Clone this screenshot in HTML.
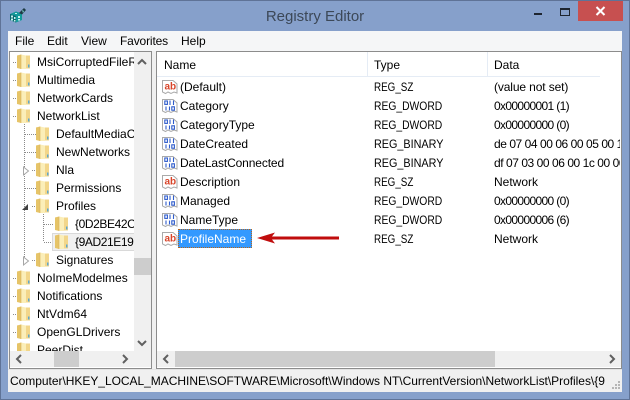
<!DOCTYPE html>
<html><head><meta charset="utf-8"><style>
html,body{margin:0;padding:0;width:630px;height:400px;overflow:hidden}
body{position:relative;background:#86a0cb;font:12px "Liberation Sans",sans-serif;color:#000}
.a{position:absolute}
.t{position:absolute;white-space:nowrap;line-height:16px;height:16px}
.d{transform:scaleX(.86);transform-origin:0 0}
.z{transform:scaleX(.82);transform-origin:0 0}
.n{transform:scaleX(.9);transform-origin:0 0}
.x{letter-spacing:-.65px}
.h{letter-spacing:-.45px}
svg{position:absolute;overflow:visible}
</style></head><body>
<svg width="0" height="0" style="position:absolute"><defs>
<g id="f"><path d="M0 1.500L4 .5V15L0 14Z" fill="#e6c468"/><path d="M4 .5L9 1.500V15H4Z" fill="#fbeeb8"/><path d="M9 1.500H13V14.500H9Z" fill="#f2d68a"/><path d="M4 .5V15" stroke="#d8b25c" stroke-width=".6"/><path d="M11 10.500h1.500v3H11z" fill="#5ea7cf"/></g>
<g id="ab"><path d="M.5 1.500H11L15 5V14L12 13L9 14.500L6 13L3.500 14.500L.5 13Z" fill="#fff" stroke="#aaa"/><text x="2.500" y="10.500" font-family="Liberation Sans" font-size="10" font-weight="bold" fill="#d8452a">ab</text></g>
<g id="b"><path d="M.5 1.500H11L15 5V14L12 13L9 14.500L6 13L3.500 14.500L.5 13Z" fill="#fff" stroke="#aaa"/><g fill="none" stroke="#2f5ccc" stroke-width="1.100"><rect x="2.800" y="3" width="2.600" height="3.400"/><path d="M8 2.500v4.500M11.500 2.500v4.500M4 8.500v4M7.500 8.500v4"/><rect x="9.800" y="8.800" width="2.600" height="3.400"/></g></g>
</defs></svg>

<div class="a" style="left:0;top:0;width:628px;height:398px;border:1px solid #5f7397"></div>
<svg style="left:10px;top:8px" width="17" height="15"><path d="M0 6L6 3.500L12 5.500V12L6 14.500L0 12Z" fill="#149a9a"/><path d="M0 6L6 8V14.500L0 12Z" fill="#0b6a70"/><path d="M1 7.500h2v2H1zM1 10.500h2v2H1zM4 9h1.500v2H4zM4 12h1.500v1.500H4zM8 8h2v2H8zM8 11h2v1.500H8zM5 5h2v1H5z" fill="#c8f3ee"/><path d="M9 5L14 0L16 2L12 6.500Z" fill="#1d3a44"/><path d="M12 2l2 1-1 2z" fill="#7fd3d0"/></svg>
<div class="t" style="left:0;top:7px;width:630px;text-align:center;font-size:15px;line-height:20px;height:20px;color:#3c4858">Registry Editor</div>
<div class="a" style="left:578px;top:1px;width:45px;height:20px;background:#c75050"></div>
<svg style="left:595px;top:6px" width="12" height="10"><path d="M1.500 1L9.500 9M9.500 1L1.500 9" stroke="#fff" stroke-width="2"/></svg>
<div class="a" style="left:534px;top:13px;width:8px;height:2px;background:#1e2530"></div>
<div class="a" style="left:560px;top:8px;width:8px;height:5px;border:1px solid #1e2530;border-top-width:2px"></div>

<div class="a" style="left:8px;top:31px;width:614px;height:361px;background:#f0f0f0"></div>
<div class="a" style="left:8px;top:31px;width:614px;height:20px;background:#f5f6f7"></div>
<div class="t" style="left:15px;top:33px">File</div>
<div class="t" style="left:47px;top:33px">Edit</div>
<div class="t" style="left:81px;top:33px">View</div>
<div class="t" style="left:120px;top:33px;letter-spacing:-.15px">Favorites</div>
<div class="t" style="left:181px;top:33px">Help</div>

<!-- tree pane -->
<div class="a" style="left:9px;top:51px;width:141px;height:316px;border:1px solid #8c8c8c;background:#fff"></div>
<div class="a" style="left:134px;top:52px;width:17px;height:299px;background:#f0f0f0"></div>
<div class="a" style="left:134px;top:258px;width:17px;height:17px;background:#cdcdcd"></div>
<div class="a" style="left:10px;top:351px;width:141px;height:16px;background:#f0f0f0"></div>
<div class="a" style="left:54px;top:351px;width:25px;height:16px;background:#cdcdcd"></div>
<svg style="left:136px;top:58px" width="12" height="8"><path d="M2 6L6 2L10 6" fill="none" stroke="#606060" stroke-width="2"/></svg>
<svg style="left:136px;top:339px" width="12" height="8"><path d="M2 2L6 6L10 2" fill="none" stroke="#606060" stroke-width="2"/></svg>
<svg style="left:15px;top:354px" width="8" height="10"><path d="M6 1L2 5L6 9" fill="none" stroke="#606060" stroke-width="2"/></svg>
<svg style="left:121px;top:354px" width="8" height="10"><path d="M2 1L6 5L2 9" fill="none" stroke="#606060" stroke-width="2"/></svg>

<!-- tree dots -->
<svg style="left:0;top:0" width="160" height="360">
<g stroke="#8a8a8a" stroke-dasharray="1 1" fill="none">
<path d="M13 62.500h4M13 80.500h4M13 98.500h4M13 116.500h4M13 278.500h4M13 296.500h4M13 314.500h4M13 332.500h4"/>
<path d="M24.500 124V260M25 134.500h11M25 152.500h11M32 170.500h4M25 188.500h11M32 206.500h4M32 260.500h4"/>
<path d="M43.500 214V242M44 224.500h10M44 242.500h10"/>
</g>
<path d="M23.500 167L28.500 171L23.500 175Z M23.500 257L28.500 261L23.500 265Z" fill="#fff" stroke="#a6a6a6"/>
<path d="M22 210H28V204Z" fill="#404040"/>
</svg>
<div class="a" style="left:10px;top:52px;width:124px;height:299px;overflow:hidden">
<svg style="left:7px;top:2px" width="16" height="16"><use href="#f"/></svg>
<svg style="left:7px;top:20px" width="16" height="16"><use href="#f"/></svg>
<svg style="left:7px;top:38px" width="16" height="16"><use href="#f"/></svg>
<svg style="left:7px;top:56px" width="16" height="16"><use href="#f"/></svg>
<svg style="left:26px;top:74px" width="16" height="16"><use href="#f"/></svg>
<svg style="left:26px;top:92px" width="16" height="16"><use href="#f"/></svg>
<svg style="left:26px;top:110px" width="16" height="16"><use href="#f"/></svg>
<svg style="left:26px;top:128px" width="16" height="16"><use href="#f"/></svg>
<svg style="left:26px;top:146px" width="16" height="16"><use href="#f"/></svg>
<svg style="left:45px;top:164px" width="16" height="16"><use href="#f"/></svg>
<div class="a" style="left:42px;top:181px;width:92px;height:18px;background:#f0f0f0;border:1px solid #d9d9d9;box-sizing:border-box"></div>
<svg style="left:45px;top:182px" width="16" height="16"><use href="#f"/></svg>
<svg style="left:26px;top:200px" width="16" height="16"><use href="#f"/></svg>
<svg style="left:7px;top:218px" width="16" height="16"><use href="#f"/></svg>
<svg style="left:7px;top:236px" width="16" height="16"><use href="#f"/></svg>
<svg style="left:7px;top:254px" width="16" height="16"><use href="#f"/></svg>
<svg style="left:7px;top:272px" width="16" height="16"><use href="#f"/></svg>
<svg style="left:7px;top:290px" width="16" height="16"><use href="#f"/></svg>
<div class="t" style="left:27px;top:2px">MsiCorruptedFileRecovery</div>
<div class="t" style="left:27px;top:20px">Multimedia</div>
<div class="t" style="left:27px;top:38px">NetworkCards</div>
<div class="t" style="left:27px;top:56px">NetworkList</div>
<div class="t" style="left:46px;top:74px">DefaultMediaCost</div>
<div class="t" style="left:46px;top:92px">NewNetworks</div>
<div class="t" style="left:46px;top:110px">Nla</div>
<div class="t" style="left:46px;top:128px">Permissions</div>
<div class="t" style="left:46px;top:146px">Profiles</div>
<div class="t" style="left:65px;top:164px;letter-spacing:-.4px">{0D2BE42C-1234</div>
<div class="t" style="left:65px;top:182px;letter-spacing:-.4px">{9AD21E19-1234</div>
<div class="t" style="left:46px;top:200px">Signatures</div>
<div class="t" style="left:27px;top:218px">NoImeModelmes</div>
<div class="t" style="left:27px;top:236px">Notifications</div>
<div class="t" style="left:27px;top:254px">NtVdm64</div>
<div class="t" style="left:27px;top:272px">OpenGLDrivers</div>
<div class="t" style="left:27px;top:290px">PeerDist</div>
</div>

<!-- list pane -->
<div class="a" style="left:156px;top:51px;width:464px;height:316px;border:1px solid #8c8c8c;background:#fff"></div>
<div class="a" style="left:157px;top:76px;width:443px;height:1px;background:#e5ecf5"></div>
<div class="a" style="left:367px;top:52px;width:1px;height:24px;background:#e5ecf5"></div>
<div class="a" style="left:487px;top:52px;width:1px;height:24px;background:#e5ecf5"></div>
<div class="a" style="left:157px;top:351px;width:464px;height:16px;background:#f0f0f0"></div>
<div class="a" style="left:175px;top:351px;width:320px;height:16px;background:#cdcdcd"></div>
<svg style="left:162px;top:354px" width="8" height="10"><path d="M6 1L2 5L6 9" fill="none" stroke="#606060" stroke-width="2"/></svg>
<svg style="left:608px;top:354px" width="8" height="10"><path d="M2 1L6 5L2 9" fill="none" stroke="#606060" stroke-width="2"/></svg>
<div class="t" style="left:164px;top:57px">Name</div>
<div class="t" style="left:374px;top:57px">Type</div>
<div class="t" style="left:494px;top:57px">Data</div>

<svg style="left:162px;top:79px" width="16" height="16"><use href="#ab"/></svg>
<svg style="left:162px;top:98px" width="16" height="16"><use href="#b"/></svg>
<svg style="left:162px;top:117px" width="16" height="16"><use href="#b"/></svg>
<svg style="left:162px;top:136px" width="16" height="16"><use href="#b"/></svg>
<svg style="left:162px;top:155px" width="16" height="16"><use href="#b"/></svg>
<svg style="left:162px;top:174px" width="16" height="16"><use href="#ab"/></svg>
<svg style="left:162px;top:193px" width="16" height="16"><use href="#b"/></svg>
<svg style="left:162px;top:212px" width="16" height="16"><use href="#b"/></svg>
<svg style="left:162px;top:231px" width="16" height="16"><use href="#ab"/></svg>

<div class="t" style="left:180px;top:79px">(Default)</div>
<div class="t" style="left:180px;top:98px">Category</div>
<div class="t" style="left:180px;top:117px">CategoryType</div>
<div class="t" style="left:180px;top:136px">DateCreated</div>
<div class="t" style="left:180px;top:155px;letter-spacing:-.12px">DateLastConnected</div>
<div class="t" style="left:180px;top:174px">Description</div>
<div class="t" style="left:180px;top:193px">Managed</div>
<div class="t" style="left:180px;top:212px">NameType</div>
<div class="a" style="left:178px;top:229px;width:74px;height:19px;background:#3399ff;outline:1px dotted #b5651d;outline-offset:-1px"></div>
<div class="t" style="left:180px;top:231px;color:#fff">ProfileName</div>

<div class="t z" style="left:374px;top:79px">REG_SZ</div>
<div class="t d" style="left:374px;top:98px">REG_DWORD</div>
<div class="t d" style="left:374px;top:117px">REG_DWORD</div>
<div class="t n" style="left:374px;top:136px">REG_BINARY</div>
<div class="t n" style="left:374px;top:155px">REG_BINARY</div>
<div class="t z" style="left:374px;top:174px">REG_SZ</div>
<div class="t d" style="left:374px;top:193px">REG_DWORD</div>
<div class="t d" style="left:374px;top:212px">REG_DWORD</div>
<div class="t z" style="left:374px;top:231px">REG_SZ</div>

<div class="a" style="left:494px;top:79px;width:126px;height:170px;overflow:hidden">
<div class="t" style="left:0;top:0;letter-spacing:-.12px">(value not set)</div>
<div class="t x" style="left:0;top:19px">0x00000001 (1)</div>
<div class="t x" style="left:0;top:38px">0x00000000 (0)</div>
<div class="t h" style="left:0;top:57px">de 07 04 00 06 00 05 00 11 00</div>
<div class="t h" style="left:0;top:76px">df 07 03 00 06 00 1c 00 00 00</div>
<div class="t" style="left:0;top:95px">Network</div>
<div class="t x" style="left:0;top:114px">0x00000000 (0)</div>
<div class="t x" style="left:0;top:133px">0x00000006 (6)</div>
<div class="t" style="left:0;top:152px">Network</div>
</div>

<!-- arrow -->
<svg style="left:257px;top:231px" width="84" height="14"><path d="M0 7L18 1.500L15 5.500H82V8.500H15L18 12.500Z" fill="#c00d0d"/></svg>

<!-- status -->
<div class="a" style="left:8px;top:369px;width:614px;height:1px;background:#e3e3e3"></div>
<div class="a" style="left:8px;top:370px;width:614px;height:22px;background:#f0f0f0"></div>
<div class="t" style="left:10px;top:373px;width:597px;overflow:hidden;letter-spacing:-.03px">Computer\HKEY_LOCAL_MACHINE\SOFTWARE\Microsoft\Windows NT\CurrentVersion\NetworkList\Profiles\{9</div>
<svg style="left:610px;top:380px" width="12" height="12"><path d="M8 1h2v2H8zM5 4h2v2H5zM8 4h2v2H8zM2 7h2v2H2zM5 7h2v2H5zM8 7h2v2H8z" fill="#b5b5b5"/></svg>
</body></html>
